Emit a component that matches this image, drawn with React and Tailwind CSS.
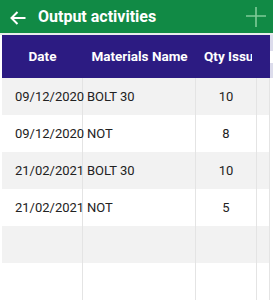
import React from "react";

const rows = [
  ["09/12/2020", "BOLT 30", "10"],
  ["09/12/2020", "NOT", "8"],
  ["21/02/2021", "BOLT 30", "10"],
  ["21/02/2021", "NOT", "5"],
  ["", "", ""],
  ["", "", ""],
];

export default function App() {
  return (
    <div className="w-[273px] h-[300px] overflow-hidden bg-white" style={{ fontFamily: "Roboto, 'Liberation Sans', sans-serif" }}>
      <div className="h-[33px] bg-[#118a45] flex items-center">
        <svg width="16" height="14" viewBox="0 0 16 14" className="ml-[10px] mt-[2px]">
          <path d="M15.5 7H1.5M7.5 1L1.5 7l6 6" fill="none" stroke="white" strokeWidth="2" />
        </svg>
        <div className="ml-[12px] text-white font-bold text-[16px] leading-none">Output activities</div>
        <div className="flex-1" />
        <svg width="20" height="20" viewBox="0 0 20 20" className="mr-[7px]">
          <path d="M0 9H20M10 0V20" fill="none" stroke="#7fcb98" strokeWidth="1.6" />
        </svg>
      </div>
      <div className="h-[2px] bg-[#e9ecea]" />
      <div className="pl-[2px]">
        <div className="flex h-[43px] bg-[#2c1b82] text-white font-bold text-[13.5px]">
          <div className="w-[81px] flex items-center justify-center">Date</div>
          <div className="w-[113px] flex items-center justify-center whitespace-nowrap">Materials Name</div>
          <div className="w-[61px] flex items-center pl-[8px] pr-[5px] overflow-hidden whitespace-nowrap">
            <span className="overflow-hidden">Qty Issued</span>
          </div>
          <div className="w-[13px]" />
          <div className="w-[3px] bg-[#dcdcec] flex items-center">
            <div className="w-[3px] h-[12px] bg-white" />
          </div>
        </div>
        {rows.map((r, i) => (
          <div key={i} className={`flex h-[37px] text-[13px] text-[#222] ${i % 2 === 0 ? "bg-[#f2f2f2]" : "bg-white"}`}>
            <div className="w-[81px] flex items-center pl-[13px] whitespace-nowrap border-r border-[#e4e4e4]">{r[0]}</div>
            <div className="w-[113px] flex items-center pl-[4px] border-r border-[#e4e4e4]">{r[1]}</div>
            <div className="w-[61px] flex items-center justify-center border-r border-[#e4e4e4]">{r[2]}</div>
            <div className="w-[13px] border-r border-[#e4e4e4]" />
            <div className="w-[3px] bg-white" />
          </div>
        ))}
      </div>
    </div>
  );
}
